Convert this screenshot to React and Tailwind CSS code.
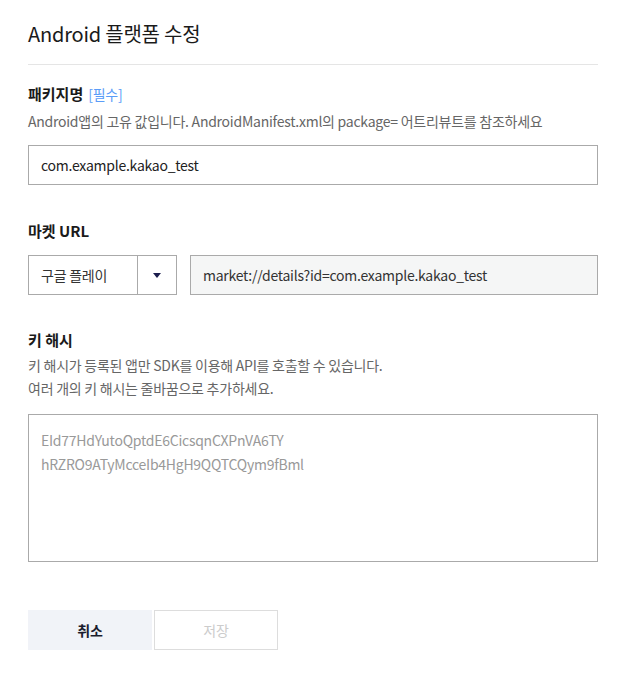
const font = { fontFamily: '"Noto Sans CJK KR", "Noto Sans", sans-serif' };

export default function App() {
  return (
    <div className="min-h-[690px] bg-white pt-5 text-[#1a1a1a] tracking-[-0.25px]" style={font}>
      <div className="ml-7 w-[570px]">
        <div className="border-b border-[#e5e5e5] pb-4">
          <h1 className="text-[20px] leading-[28px] font-normal tracking-[-0.2px]">Android 플랫폼 수정</h1>
        </div>

        {/* 패키지명 */}
        <div className="mt-[18px]">
          <div className="flex items-center gap-[5px]">
            <span className="text-[15px] leading-[22px] font-bold tracking-normal">패키지명</span>
            <span className="text-[14px] leading-[22px] text-[#5a9cf8]">[필수]</span>
          </div>
          <p className="mt-[5px] text-[14px] leading-[23px] text-[#666]">
            Android앱의 고유 값입니다. AndroidManifest.xml의 package= 어트리뷰트를 참조하세요
          </p>
          <div className="mt-3 flex h-10 items-center border border-[#aaa] px-3 text-[14px] text-[#222]">
            com.example.kakao_test
          </div>
        </div>

        {/* 마켓 URL */}
        <div className="mt-[35px]">
          <div className="text-[15px] leading-[22px] font-bold tracking-normal">마켓 URL</div>
          <div className="mt-[13px] flex gap-[13px]">
            <div className="flex h-10 w-[149px] border border-[#aaa]">
              <div className="flex flex-1 items-center px-3 text-[14px] text-[#333]">구글 플레이</div>
              <div className="flex w-[39px] items-center justify-center border-l border-[#aaa]">
                <svg width="8" height="5" viewBox="0 0 8 5">
                  <polygon points="0,0 8,0 4,5" fill="#1b1d4d" />
                </svg>
              </div>
            </div>
            <div className="flex h-10 flex-1 items-center border border-[#aaa] bg-[#f5f6f6] px-3 text-[14px] text-[#333]">
              market://details?id=com.example.kakao_test
            </div>
          </div>
        </div>

        {/* 키 해시 */}
        <div className="mt-[34px]">
          <div className="text-[15px] leading-[22px] font-bold tracking-normal">키 해시</div>
          <p className="mt-[3px] text-[14px] leading-[23px] text-[#666]">
            키 해시가 등록된 앱만 SDK를 이용해 API를 호출할 수 있습니다.
            <br />
            여러 개의 키 해시는 줄바꿈으로 추가하세요.
          </p>
          <div className="mt-[14px] h-[148px] border border-[#aaa] px-3 pt-[13px] text-[14px] leading-[24px] text-[#999]">
            <div>EId77HdYutoQptdE6CicsqnCXPnVA6TY</div>
            <div>hRZRO9ATyMcceIb4HgH9QQTCQym9fBml</div>
          </div>
        </div>

        {/* 버튼 */}
        <div className="mt-12 flex gap-0.5">
          <button className="h-10 w-[124px] bg-[#f1f3f8] text-[14px] font-bold text-[#1b1d2e]">취소</button>
          <button className="h-10 w-[124px] border border-[#ddd] bg-white text-[14px] text-[#ccc]">저장</button>
        </div>
      </div>
    </div>
  );
}
